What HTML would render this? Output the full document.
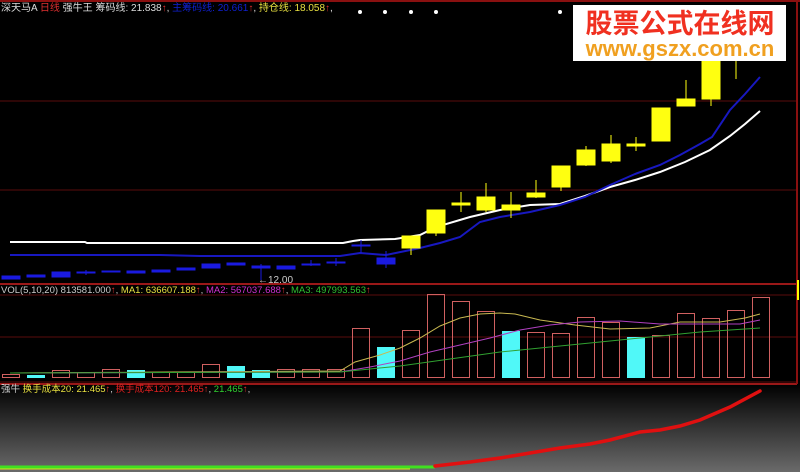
<!DOCTYPE html>
<html><head><meta charset="utf-8"><style>
body{margin:0;width:800px;height:472px;overflow:hidden;background:#000;font-family:"Liberation Sans","Noto Sans CJK SC",sans-serif}
svg{display:block}
text{font-family:"Liberation Sans","Noto Sans CJK SC",sans-serif;font-size:10px}
</style></head><body>
<svg width="800" height="472" viewBox="0 0 800 472">
<defs><linearGradient id="g" x1="0" y1="0" x2="0" y2="1"><stop offset="0" stop-color="#000"/><stop offset="1" stop-color="#6a6a6a"/></linearGradient></defs>
<rect x="0" y="384" width="800" height="88" fill="url(#g)"/>
<line x1="0" y1="1" x2="800" y2="1" stroke="#8a1010" stroke-width="2"/>
<line x1="0" y1="101" x2="797" y2="101" stroke="#5a0c0c"/>
<line x1="0" y1="190" x2="797" y2="190" stroke="#5a0c0c"/>
<line x1="0" y1="284" x2="797" y2="284" stroke="#9a1818" stroke-width="2"/>
<line x1="0" y1="295" x2="797" y2="295" stroke="#5a0c0c"/>
<line x1="0" y1="337" x2="797" y2="337" stroke="#5a0c0c"/>
<line x1="0" y1="382" x2="797" y2="382" stroke="#5a0c0c"/>
<line x1="0" y1="384" x2="797" y2="384" stroke="#9a1818" stroke-width="2"/>
<line x1="797" y1="0" x2="797" y2="384" stroke="#8a1010" stroke-width="2"/>
<rect x="797" y="280" width="2" height="20" fill="#ff0"/>
<!-- header texts -->
<text x="1" y="11" fill="#ddd">深天马A <tspan fill="#e03030">日线</tspan> 强牛王 筹码线: 21.838<tspan fill="#e03030">↑</tspan>, <tspan fill="#1020d0">主筹码线: 20.661</tspan><tspan fill="#e03030">↑</tspan>, <tspan fill="#e8e040">持仓线: 18.058</tspan><tspan fill="#e03030">↑</tspan>,</text>
<g fill="#fff"><circle cx="360" cy="12" r="2"/><circle cx="385" cy="12" r="2"/><circle cx="411" cy="12" r="2"/><circle cx="436" cy="12" r="2"/><circle cx="560" cy="12" r="2"/></g>
<text x="258" y="283" fill="#ccc" font-size="10">←12.00</text>
<!-- MA lines top -->
<polyline fill="none" stroke="#fff" stroke-width="2" points="10,242 85,242 87,243 343,243 353,241 360,240 395,239 420,235 436,227 470,217 500,210 530,205 560,204 585,196 610,187 635,180 660,172 685,162 710,150 730,136 745,124 760,111"/>
<polyline fill="none" stroke="#1818c0" stroke-width="2" points="10,255 160,255 200,256 340,256 360,253 386,255 420,248 440,243 460,237 480,222 500,217 530,212 560,205 585,197 610,185 635,174 660,165 680,155 700,144 712,137 730,110 745,94 760,77"/>
<!-- candles -->
<g fill="#1a1ae0" stroke="#1a1ae0">
<rect x="2" y="276" width="18" height="3"/><rect x="27" y="275" width="18" height="2"/><rect x="52" y="272" width="18" height="5"/><line x1="86" y1="270" x2="86" y2="275"/><rect x="77" y="272" width="18" height="1"/><rect x="102" y="271" width="18" height="1"/><rect x="127" y="271" width="18" height="2"/><rect x="152" y="270" width="18" height="2"/><rect x="177" y="268" width="18" height="2"/><rect x="202" y="264" width="18" height="4"/><rect x="227" y="263" width="18" height="2"/><line x1="261" y1="264" x2="261" y2="280"/><rect x="252" y="266" width="18" height="2"/><rect x="277" y="266" width="18" height="3"/><line x1="311" y1="260" x2="311" y2="266"/><rect x="302" y="264" width="18" height="1"/><line x1="336" y1="258" x2="336" y2="266"/><rect x="327" y="262" width="18" height="1"/><line x1="361" y1="240" x2="361" y2="253"/><rect x="352" y="245" width="18" height="1"/><line x1="386" y1="251" x2="386" y2="268"/><rect x="377" y="258" width="18" height="6"/>
</g>
<g fill="#ffff10" stroke="#ffff10">
<line x1="411" y1="236" x2="411" y2="255"/><rect x="402" y="236" width="18" height="12"/>
<line x1="436" y1="210" x2="436" y2="236"/><rect x="427" y="210" width="18" height="23"/>
<line x1="461" y1="192" x2="461" y2="212"/><rect x="452" y="203" width="18" height="2"/>
<line x1="486" y1="183" x2="486" y2="212"/><rect x="477" y="197" width="18" height="13"/>
<line x1="511" y1="192" x2="511" y2="218"/><rect x="502" y="205" width="18" height="5"/>
<line x1="536" y1="180" x2="536" y2="198"/><rect x="527" y="193" width="18" height="4"/>
<line x1="561" y1="166" x2="561" y2="191"/><rect x="552" y="166" width="18" height="21"/>
<line x1="586" y1="146" x2="586" y2="166"/><rect x="577" y="150" width="18" height="15"/>
<line x1="611" y1="135" x2="611" y2="163"/><rect x="602" y="144" width="18" height="17"/>
<line x1="636" y1="137" x2="636" y2="151"/><rect x="627" y="144" width="18" height="2"/>
<rect x="652" y="108" width="18" height="33"/>
<line x1="686" y1="80" x2="686" y2="106"/><rect x="677" y="99" width="18" height="7"/>
<line x1="711" y1="50" x2="711" y2="106"/><rect x="702" y="50" width="18" height="49"/>
<line x1="736" y1="40" x2="736" y2="79"/>
</g>
<!-- watermark -->
<rect x="573" y="5" width="213" height="56" fill="#fff"/>
<text x="680" y="33" text-anchor="middle" fill="#f03020" font-size="27" font-weight="bold" style="font-size:27px">股票公式在线网</text>
<text x="680" y="56" text-anchor="middle" fill="#f0a020" font-size="22" font-weight="bold" style="font-size:22px">www.gszx.com.cn</text>
<!-- VOL -->
<text x="1" y="293" fill="#ccc" style="font-size:9.5px">VOL(5,10,20) 813581.000<tspan fill="#e03030">↑</tspan>, <tspan fill="#e8e040">MA1: 636607.188</tspan><tspan fill="#e03030">↑</tspan>, <tspan fill="#d030d0">MA2: 567037.688</tspan><tspan fill="#e03030">↑</tspan>, <tspan fill="#30c030">MA3: 497993.563</tspan><tspan fill="#e03030">↑</tspan></text>
<g fill="none" stroke="#d06060">
<rect x="2.5" y="374.5" width="17" height="3"/><rect x="52.5" y="370.5" width="17" height="7"/><rect x="77.5" y="372.5" width="17" height="5"/><rect x="102.5" y="369.5" width="17" height="8"/><rect x="152.5" y="372.5" width="17" height="5"/><rect x="177.5" y="372.5" width="17" height="5"/><rect x="202.5" y="364.5" width="17" height="13"/><rect x="277.5" y="369.5" width="17" height="8"/><rect x="302.5" y="369.5" width="17" height="8"/><rect x="327.5" y="369.5" width="17" height="8"/><rect x="352.5" y="328.5" width="17" height="49"/>
<rect x="402.5" y="330.5" width="17" height="47"/><rect x="427.5" y="294.5" width="17" height="83"/><rect x="452.5" y="301.5" width="17" height="76"/><rect x="477.5" y="311.5" width="17" height="66"/><rect x="527.5" y="332.5" width="17" height="45"/><rect x="552.5" y="333.5" width="17" height="44"/><rect x="577.5" y="317.5" width="17" height="60"/><rect x="602.5" y="322.5" width="17" height="55"/><rect x="652.5" y="335.5" width="17" height="42"/><rect x="677.5" y="313.5" width="17" height="64"/><rect x="702.5" y="318.5" width="17" height="59"/><rect x="727.5" y="310.5" width="17" height="67"/><rect x="752.5" y="297.5" width="17" height="80"/>
</g>
<g fill="#50f8f8">
<rect x="27" y="375" width="18" height="3"/><rect x="127" y="370" width="18" height="8"/><rect x="227" y="366" width="18" height="12"/><rect x="252" y="370" width="18" height="8"/><rect x="377" y="347" width="18" height="31"/><rect x="502" y="331" width="18" height="47"/><rect x="627" y="337" width="18" height="41"/>
</g>
<polyline fill="none" stroke="#c8b850" points="10,373 340,371 355,362 380,355 400,348 420,338 440,326 460,318 480,314 500,313 515,314 540,320 575,325 610,329 650,328 680,322 720,322 745,318 760,314"/>
<polyline fill="none" stroke="#b040c0" points="10,373 340,372 370,367 400,361 430,352 460,345 490,338 520,330 550,325 580,322 620,321 660,324 720,324 740,324 760,320"/>
<polyline fill="none" stroke="#30a030" points="10,373 340,372 370,369 400,366 450,359 500,352 550,347 600,342 650,337 700,332 760,328"/>
<!-- bottom pane -->
<text x="1" y="392" fill="#ccc" style="font-size:9.5px">强牛 <tspan fill="#e8e040">换手成本20: 21.465</tspan><tspan fill="#e03030">↑</tspan>, <tspan fill="#e02020">换手成本120: 21.465</tspan><tspan fill="#e03030">↑</tspan>, <tspan fill="#30d030">21.465</tspan><tspan fill="#e03030">↑</tspan>,</text>
<line x1="0" y1="467" x2="435" y2="467" stroke="#40e020" stroke-width="3"/>
<line x1="0" y1="469" x2="410" y2="469" stroke="#e0e020" stroke-width="1"/>
<polyline fill="none" stroke="#e01010" stroke-width="3.5" stroke-linecap="round" points="435,466 470,462 500,458 530,453 560,448 590,444 610,440 640,432 660,430 680,426 700,420 730,407 760,391"/>
</svg>
</body></html>
